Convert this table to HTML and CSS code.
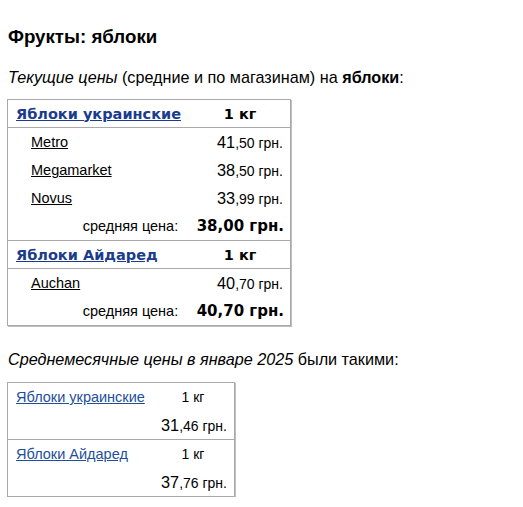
FILE: index.html
```html
<!DOCTYPE html>
<html lang="ru">
<head>
<meta charset="utf-8">
<link rel="stylesheet" href="styles.css">
</head>
<body>
<h1 class="title">Фрукты: яблоки</h1>
<p class="intro"><i>Текущие цены</i> (средние и по магазинам) на <b>яблоки</b>:</p>
<table class="prices">
  <tr class="head"><th class="name"><a href="#">Яблоки украинские</a></th><th class="unit">1 кг</th></tr>
  <tr class="shop"><td class="store"><a href="#">Metro</a></td><td class="price"><span class="big">41</span>,50 грн.</td></tr>
  <tr class="shop"><td class="store"><a href="#">Megamarket</a></td><td class="price"><span class="big">38</span>,50 грн.</td></tr>
  <tr class="shop"><td class="store"><a href="#">Novus</a></td><td class="price"><span class="big">33</span>,99 грн.</td></tr>
  <tr class="avg"><td class="avg-label">средняя цена:</td><td class="avg-val">38,00 грн.</td></tr>
  <tr class="head"><th class="name"><a href="#">Яблоки Айдаред</a></th><th class="unit">1 кг</th></tr>
  <tr class="shop"><td class="store"><a href="#">Auchan</a></td><td class="price"><span class="big">40</span>,70 грн.</td></tr>
  <tr class="avg"><td class="avg-label">средняя цена:</td><td class="avg-val">40,70 грн.</td></tr>
</table>
<p class="intro second"><i>Среднемесячные цены в январе 2025</i> были такими:</p>
<table class="monthly">
  <tr class="top"><td class="mname"><a href="#">Яблоки украинские</a></td><td class="munit">1 кг</td></tr>
  <tr class="bottom"><td></td><td class="mprice"><span class="big">31</span>,46 грн.</td></tr>
  <tr class="top sep"><td class="mname"><a href="#">Яблоки Айдаред</a></td><td class="munit">1 кг</td></tr>
  <tr class="bottom"><td></td><td class="mprice"><span class="big">37</span>,76 грн.</td></tr>
</table>
</body>
</html>
```
FILE: styles.css
```css
body {
  margin: 0;
  padding: 0 8px;
  font-family: "Liberation Sans", Arial, sans-serif;
  color: #000;
  background: #fff;
}
.title {
  font-size: 18.7px;
  font-weight: bold;
  margin: 0;
  padding-top: 26px;
  line-height: 21px;
}
.intro {
  font-size: 16.2px;
  margin: 0;
  padding-top: 21px;
  line-height: 18px;
}
.second {
  padding-top: 24px;
}
table {
  border-collapse: collapse;
  border: 1px solid #a9a9a9;
  box-shadow: 1px 1px 0 #bdbdbd;
  margin-left: -1px;
}
.prices {
  width: 284px;
  margin-top: 13px;
}
.prices .head th {
  height: 27px;
  padding: 0;
  font-family: "DejaVu Sans", Verdana, sans-serif;
  font-size: 14.5px;
  font-weight: bold;
  border-top: 1px solid #a9a9a9;
  border-bottom: 1px solid #a9a9a9;
}
.prices .head .name {
  text-align: left;
  padding-left: 8px;
  width: 182px;
}
.prices .head .name a {
  color: #1b3c8c;
}
.prices .head .unit {
  text-align: center;
  padding-left: 4px;
}
.prices td {
  height: 28px;
  padding: 0;
}
.store {
  padding-left: 23px !important;
  font-size: 14.5px;
}
.store a {
  color: #000;
}
.price {
  text-align: right;
  padding-right: 7px !important;
  font-size: 14px;
}
.big {
  font-size: 16.3px;
}
.avg-label {
  text-align: right;
  font-size: 14.5px;
  padding-right: 8px !important;
}
.avg-val {
  text-align: right;
  padding-right: 6px !important;
  font-family: "DejaVu Sans", Verdana, sans-serif;
  font-weight: bold;
  font-size: 15px;
  width: 106px;
}
.monthly {
  width: 228px;
  margin-top: 14px;
}
.monthly td {
  padding: 0;
  height: 28px;
}
.monthly .sep td {
  border-top: 1px solid #a9a9a9;
}
.mname {
  padding-left: 8px !important;
  font-size: 14.5px;
  width: 136px;
}
.mname a {
  color: #1f4f9b;
}
.munit {
  text-align: center;
  font-size: 14px;
}
.mprice {
  text-align: right;
  font-size: 14px;
  padding-right: 7px !important;
}
```
